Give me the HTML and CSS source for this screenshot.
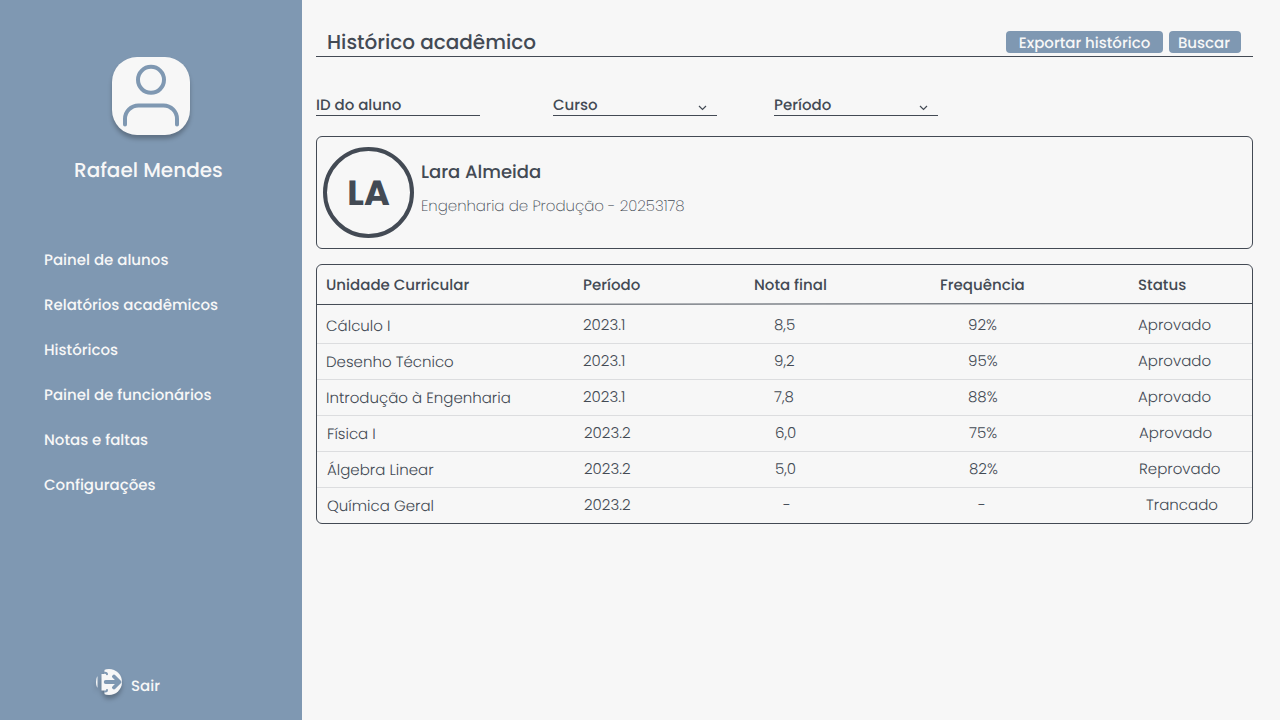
FILE: index.html
```html
<!DOCTYPE html>
<html lang="pt-BR">
<head>
<meta charset="utf-8">
<title>Histórico acadêmico</title>
<link rel="stylesheet" href="styles.css">
</head>
<body>
<div class="app">
  <aside class="sidebar">
    <div class="avatar">
      <svg width="78" height="78" viewBox="0 0 78 78" fill="none" stroke="#7f98b2" stroke-width="4" stroke-linecap="round">
        <circle cx="39" cy="22.8" r="13"/>
        <path d="M13 67.5V62a13.5 13.5 0 0 1 13.500-13.500h25A13.500 13.500 0 0 1 65 62v5.500"/>
      </svg>
    </div>
    <div class="user-name">Rafael Mendes</div>
    <nav class="menu">
      <a>Painel de alunos</a>
      <a>Relatórios acadêmicos</a>
      <a>Históricos</a>
      <a>Painel de funcionários</a>
      <a>Notas e faltas</a>
      <a>Configurações</a>
    </nav>
    <a class="logout">
      <svg class="logout-icon" width="26" height="26" viewBox="0 0 26 26" fill="none">
        <defs><clipPath id="disc"><circle cx="13" cy="13" r="13"/></clipPath></defs>
        <g clip-path="url(#disc)">
          <path fill="#f7f7f7" d="M0 7.500h1.500v11H0zM8.500 0H26v26H8.500v-4.500h-3V5h3z"/>
          <path d="M9 3.800q2 0 2 1.500M9 22.500q2 0 2-1.500" stroke="#7f98b2" stroke-width="2" stroke-linecap="round"/>
          <path d="M9.700 13H23M18 7.500L23.500 13l-5.500 5.500" stroke="#7f98b2" stroke-width="3.800" stroke-linecap="round" stroke-linejoin="round"/>
        </g>
      </svg>
      <span>Sair</span>
    </a>
  </aside>
  <main class="content">
    <header class="page-head">
      <h1>Histórico acadêmico</h1>
      <button class="btn btn-export">Exportar histórico</button>
      <button class="btn btn-search">Buscar</button>
    </header>
    <div class="filters">
      <div class="field field-id">ID do aluno</div>
      <div class="field field-course">Curso<svg width="9" height="6" viewBox="0 0 9 6" fill="none" stroke="#434a54" stroke-width="1.200"><path d="M1 1l3.500 3.500L8 1"/></svg></div>
      <div class="field">Período<svg width="9" height="6" viewBox="0 0 9 6" fill="none" stroke="#434a54" stroke-width="1.200"><path d="M1 1l3.500 3.500L8 1"/></svg></div>
    </div>
    <section class="student">
      <div class="initials">LA</div>
      <div class="student-info">
        <div class="student-name">Lara Almeida</div>
        <div class="student-course">Engenharia de Produção - 20253178</div>
      </div>
    </section>
    <section class="grades">
      <div class="row head"><span>Unidade Curricular</span><span>Período</span><span>Nota final</span><span>Frequência</span><span>Status</span></div>
      <svg class="rule" width="935" height="2" viewBox="0 0 935 2"><path d="M0 1.500L935 .5" stroke="#434a54"/></svg>
      <div class="row first"><span>Cálculo I</span><span>2023.1</span><span>8,5</span><span>92%</span><span>Aprovado</span></div>
      <div class="row"><span>Desenho Técnico</span><span>2023.1</span><span>9,2</span><span>95%</span><span>Aprovado</span></div>
      <div class="row"><span>Introdução à Engenharia</span><span>2023.1</span><span>7,8</span><span>88%</span><span>Aprovado</span></div>
      <div class="row late"><span>Física I</span><span>2023.2</span><span>6,0</span><span>75%</span><span>Aprovado</span></div>
      <div class="row late"><span>Álgebra Linear</span><span>2023.2</span><span>5,0</span><span>82%</span><span>Reprovado</span></div>
      <div class="row late open"><span>Química Geral</span><span>2023.2</span><span>-</span><span>-</span><span>Trancado</span></div>
    </section>
  </main>
</div>
</body>
</html>
```
FILE: styles.css
```css
* { box-sizing: border-box; }
body {
  margin: 0;
  background: #f7f7f7;
  color: #434a54;
  font: 500 15px/20px Poppins, Inter, sans-serif;
  text-rendering: geometricPrecision;
}
.app { display: flex; height: 720px; overflow: hidden; }

.sidebar {
  width: 302px;
  flex: none;
  background: #7f98b2;
  color: #f7f7f7;
  display: flex;
  flex-direction: column;
}
.avatar {
  width: 78px;
  height: 78px;
  margin: 57px 0 0 112px;
  border-radius: 25px;
  background: #f7f7f7;
  box-shadow: 0 4px 4px rgba(0, 0, 0, .25);
}
.avatar svg { display: block; }
.user-name {
  margin: 20px 0 0 74px;
  font-size: 20px;
  line-height: 30px;
}
.menu {
  display: flex;
  flex-direction: column;
  margin: 53px 0 0 44px;
}
.menu a { line-height: 45px; }
.logout {
  display: flex;
  gap: 9px;
  height: 28px;
  margin: auto 0 23px 96px;
}
.logout span { padding-top: 8px; }
.logout-icon { filter: drop-shadow(0 4px 2px rgba(0, 0, 0, .25)); }

.content {
  flex: 1;
  padding: 30px 27px 0 14px;
}
.page-head {
  display: flex;
  height: 27px;
  padding: 0 12px 0 11px;
  border-bottom: 1px solid #434a54;
}
h1 {
  margin: 0 auto 0 0;
  font-size: 20px;
  font-weight: 500;
  line-height: 24px;
}
.btn {
  height: 22px;
  margin: 1px 0 0;
  padding: 4px 0 0;
  border: 0;
  border-radius: 4px;
  background: #7f98b2;
  color: #f7f7f7;
  font: inherit;
  line-height: 18px;
  text-rendering: inherit;
}
.btn-export { width: 157px; margin-right: 6px; }
.btn-search { width: 72px; padding-right: 2px; }

.filters { display: flex; margin-top: 37px; }
.field {
  display: flex;
  justify-content: space-between;
  width: 164px;
  height: 22px;
  padding-right: 10px;
  border-bottom: 1px solid #434a54;
  line-height: 24px;
}
.field svg { margin-top: 11px; }
.field-id { margin-right: 73px; }
.field-course { margin-right: 57px; }

.student {
  display: flex;
  gap: 7px;
  height: 113px;
  margin-top: 20px;
  padding: 10px 6px;
  border: 1px solid #434a54;
  border-radius: 6px;
}
.initials {
  width: 91px;
  height: 91px;
  border: 4px solid #434a54;
  border-radius: 50%;
  font-size: 35px;
  font-weight: 700;
  line-height: 86px;
  text-align: center;
}
.student-name { margin-top: 13px; font-size: 18px; line-height: 26px; }
.student-course { margin-top: 11px; font-weight: 275; line-height: 20px; }

.grades {
  height: 260px;
  margin-top: 15px;
  border: 1px solid #434a54;
  border-radius: 6px;
}
.row {
  display: grid;
  grid-template-columns: 257px 191px 194px 170px 1fr;
  height: 36px;
  padding-left: 9px;
  border-top: 1px solid #dcdddf;
  font-weight: 300;
  line-height: 36px;
}
.row span:first-child { padding-top: 1px; }
.row.head {
  height: 38px;
  grid-template-columns: 257px 171px 186px 198px 1fr;
  border: 0;
  font-weight: 500;
  line-height: 42px;
}
.row.head span:first-child { padding: 0; }
.rule { display: block; }
.row.first { height: 38px; border-top: 0; line-height: 41px; }
.row.late { padding-left: 10px; }
.row.open span:nth-child(3) { padding-left: 8px; }
.row.open span:nth-child(4) { padding-left: 9px; }
.row.open span:nth-child(5) { padding-left: 7px; }
```
